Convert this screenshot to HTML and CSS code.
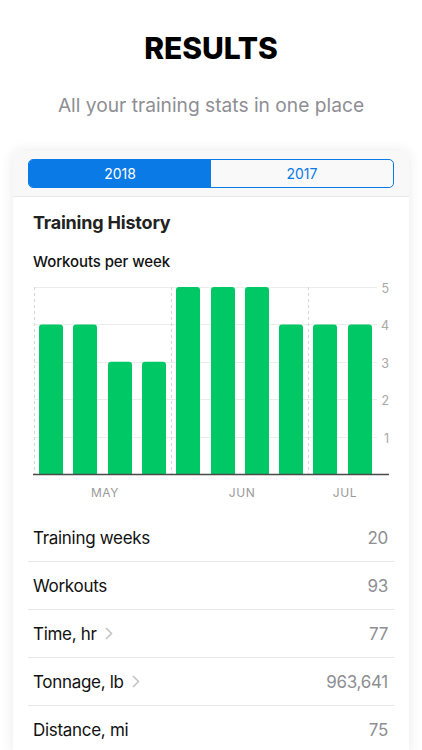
FILE: index.html
```html
<!DOCTYPE html>
<html>
<head>
<meta charset="utf-8">
<link rel="stylesheet" href="styles.css">
</head>
<body>
<header class="hero">
  <h1 class="title">RESULTS</h1>
  <p class="subtitle">All your training stats in one place</p>
</header>
<main class="card">
  <div class="card-head">
    <div class="segment">
      <div class="seg seg-on">2018</div>
      <div class="seg">2017</div>
    </div>
  </div>
  <div class="card-body">
    <h2 class="section-title">Training History</h2>
    <h3 class="chart-title">Workouts per week</h3>
    <svg class="chart" width="366" height="225" viewBox="0 0 366 225">
      <g stroke="#ececec" stroke-width="1">
        <line x1="6" y1="7.5" x2="349" y2="7.5"/>
        <line x1="6" y1="44.5" x2="349" y2="44.5"/>
        <line x1="6" y1="82.5" x2="349" y2="82.5"/>
        <line x1="6" y1="119.5" x2="349" y2="119.5"/>
        <line x1="6" y1="157.5" x2="349" y2="157.5"/>
      </g>
      <g stroke="#d4d4d4" stroke-width="1" stroke-dasharray="3 3">
        <line x1="6.5" y1="7" x2="6.5" y2="194"/>
        <line x1="143.5" y1="7" x2="143.5" y2="194"/>
        <line x1="280.5" y1="7" x2="280.5" y2="194"/>
      </g>
      <g fill="#00c864">
        <path d="M11 194V47.4a3 3 0 0 1 3-3h18a3 3 0 0 1 3 3V194z"/>
        <path d="M45 194V47.4a3 3 0 0 1 3-3h18a3 3 0 0 1 3 3V194z"/>
        <path d="M80 194V84.8a3 3 0 0 1 3-3h18a3 3 0 0 1 3 3V194z"/>
        <path d="M114 194V84.8a3 3 0 0 1 3-3h18a3 3 0 0 1 3 3V194z"/>
        <path d="M148 194V10a3 3 0 0 1 3-3h18a3 3 0 0 1 3 3V194z"/>
        <path d="M183 194V10a3 3 0 0 1 3-3h18a3 3 0 0 1 3 3V194z"/>
        <path d="M217 194V10a3 3 0 0 1 3-3h18a3 3 0 0 1 3 3V194z"/>
        <path d="M251 194V47.4a3 3 0 0 1 3-3h18a3 3 0 0 1 3 3V194z"/>
        <path d="M285 194V47.4a3 3 0 0 1 3-3h18a3 3 0 0 1 3 3V194z"/>
        <path d="M320 194V47.4a3 3 0 0 1 3-3h18a3 3 0 0 1 3 3V194z"/>
      </g>
      <line x1="5" y1="194.5" x2="361" y2="194.5" stroke="#4a4a4a" stroke-width="1.3"/>
      <g class="ylab" text-anchor="end">
        <text x="361" y="12.5">5</text>
        <text x="361" y="50">4</text>
        <text x="361" y="87.5">3</text>
        <text x="361" y="125">2</text>
        <text x="361" y="162.5">1</text>
      </g>
      <g class="xlab" text-anchor="middle">
        <text x="77" y="216.5">MAY</text>
        <text x="214" y="216.5">JUN</text>
        <text x="317" y="216.5">JUL</text>
      </g>
    </svg>
    <ul class="stats">
      <li class="row"><span class="label">Training weeks</span><span class="value">20</span></li>
      <li class="row"><span class="label">Workouts</span><span class="value">93</span></li>
      <li class="row"><span class="label">Time, hr<svg class="chev" width="8" height="13" viewBox="0 0 8 13"><path d="M1 1l5.5 5.5L1 12" fill="none" stroke="#c4c4c7" stroke-width="1.6"/></svg></span><span class="value">77</span></li>
      <li class="row"><span class="label">Tonnage, lb<svg class="chev" width="8" height="13" viewBox="0 0 8 13"><path d="M1 1l5.5 5.5L1 12" fill="none" stroke="#c4c4c7" stroke-width="1.6"/></svg></span><span class="value">963,641</span></li>
      <li class="row"><span class="label">Distance, mi</span><span class="value">75</span></li>
    </ul>
  </div>
</main>
</body>
</html>
```
FILE: styles.css
```css
* { box-sizing: border-box; }
html, body {
  margin: 0;
  padding: 0;
  background: #ffffff;
  font-family: Inter, "Noto Sans", "Liberation Sans", sans-serif;
  color: #111;
  overflow: hidden;
  height: 750px;
}
.hero {
  display: flex;
  flex-direction: column;
  align-items: center;
  padding-top: 28px;
}
.title {
  margin: 0;
  font-size: 30px;
  font-weight: 800;
  line-height: 40px;
  letter-spacing: -0.1px;
  color: #000;
}
.subtitle {
  margin: 25px 0 0;
  font-size: 19.2px;
  line-height: 24px;
  font-weight: 400;
  color: #8e8e93;
}
.card {
  margin: 34px 13px 0;
  background: #fff;
  border-radius: 8px 8px 0 0;
  box-shadow: 0 0 14px rgba(0, 0, 0, 0.09);
  overflow: hidden;
  height: 603px;
}
.card-head {
  background: #f8f8f8;
  padding: 8px 15px 8px;
  border-bottom: 1px solid #e8e8e8;
}
.segment {
  display: flex;
  height: 29px;
  border: 1px solid #0a7ae6;
  border-radius: 5px;
  overflow: hidden;
  background: #f9f9f9;
}
.seg {
  flex: 1;
  display: flex;
  align-items: center;
  justify-content: center;
  font-size: 14px;
  color: #0a7ae6;
}
.seg-on {
  background: #0a7ae6;
  color: #fff;
}
.card-body {
  padding: 0 15px;
}
.section-title {
  margin: 15px 0 0 5px;
  font-size: 18px;
  line-height: 22px;
  font-weight: 700;
  letter-spacing: -0.2px;
  color: #222;
}
.chart-title {
  margin: 19px 0 0 5px;
  font-size: 15px;
  line-height: 18px;
  font-weight: 500;
  letter-spacing: -0.1px;
  color: #111;
}
.chart {
  display: block;
  margin-top: 9px;
}
.ylab text {
  font-size: 12.5px;
  fill: #a8a8a8;
  font-family: Inter, "Liberation Sans", sans-serif;
}
.xlab text {
  font-size: 12px;
  fill: #9a9a9a;
  letter-spacing: 0.6px;
  font-family: Inter, "Liberation Sans", sans-serif;
}
.stats {
  list-style: none;
  margin: 9px 0 0;
  padding: 0;
}
.row {
  display: flex;
  align-items: center;
  justify-content: space-between;
  height: 48px;
  padding: 0 6px 0 5px;
  border-bottom: 1px solid #e6e6e6;
  font-size: 17px;
  letter-spacing: -0.3px;
}
.label {
  display: flex;
  align-items: center;
  color: #111;
}
.chev {
  margin-left: 8px;
}
.value {
  color: #8e8e93;
}
```
